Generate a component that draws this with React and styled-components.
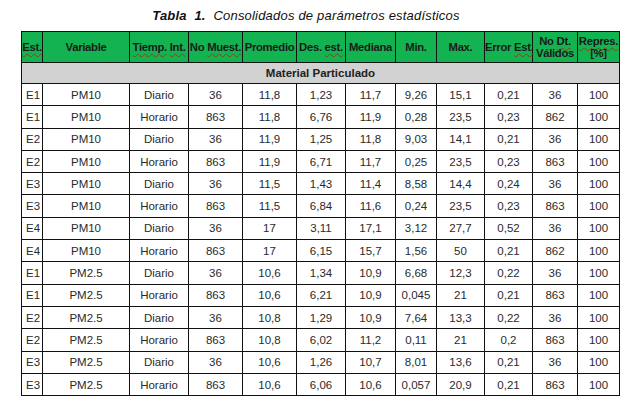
import React from 'react';
import styled, { createGlobalStyle } from 'styled-components';

const GlobalStyle = createGlobalStyle`
  body {
    margin: 0;
    background: #fff;
    font-family: "Liberation Sans", Arial, sans-serif;
  }
`;

const Page = styled.div`
  width: 639px;
  height: 407px;
  padding: 8px 0 0 21px;
  box-sizing: border-box;
  overflow: hidden;
`;

const Title = styled.div`
  width: 570px;
  text-align: center;
  font-size: 13px;
  font-style: italic;
  color: #111;
  height: 23px;
  letter-spacing: 0.2px;
  b {
    font-weight: bold;
    margin-right: 4px;
  }
`;

const Table = styled.table`
  border-collapse: collapse;
  table-layout: fixed;
  width: 598px;
  color: #2a2a2a;
  font-size: 11.5px;
`;

const HeadCell = styled.th`
  background: #14b352;
  border: 1px solid #111;
  height: 30px;
  padding: 0;
  font-size: 11.3px;
  font-weight: bold;
  color: #1a1a1a;
  line-height: 12px;
  letter-spacing: -0.3px;
  text-align: center;
  white-space: nowrap;
`;

const Squiggle = styled.span`
  text-decoration: underline wavy #7a4a1a;
  text-decoration-thickness: 1px;
  text-underline-offset: 2px;
`;

const GroupCell = styled.td`
  background: #d2d2d2;
  border: 1px solid #111;
  height: 20px;
  padding: 0;
  text-align: center;
  font-weight: bold;
  font-size: 11.5px;
  color: #222;
`;

const Row = styled.tr`
  height: 22.3px;
`;

const Cell = styled.td`
  border: 1px solid #111;
  padding: ${({ $left }) => ($left ? '0 0 0 4px' : '0')};
  text-align: ${({ $left }) => ($left ? 'left' : 'center')};
  white-space: nowrap;
`;

const widths = [21, 87, 59, 54, 54, 49, 50, 41, 48, 48, 45, 42];

const rows = [
  ['E1', 'PM10', 'Diario', '36', '11,8', '1,23', '11,7', '9,26', '15,1', '0,21', '36', '100'],
  ['E1', 'PM10', 'Horario', '863', '11,8', '6,76', '11,9', '0,28', '23,5', '0,23', '862', '100'],
  ['E2', 'PM10', 'Diario', '36', '11,9', '1,25', '11,8', '9,03', '14,1', '0,21', '36', '100'],
  ['E2', 'PM10', 'Horario', '863', '11,9', '6,71', '11,7', '0,25', '23,5', '0,23', '863', '100'],
  ['E3', 'PM10', 'Diario', '36', '11,5', '1,43', '11,4', '8,58', '14,4', '0,24', '36', '100'],
  ['E3', 'PM10', 'Horario', '863', '11,5', '6,84', '11,6', '0,24', '23,5', '0,23', '863', '100'],
  ['E4', 'PM10', 'Diario', '36', '17', '3,11', '17,1', '3,12', '27,7', '0,52', '36', '100'],
  ['E4', 'PM10', 'Horario', '863', '17', '6,15', '15,7', '1,56', '50', '0,21', '862', '100'],
  ['E1', 'PM2.5', 'Diario', '36', '10,6', '1,34', '10,9', '6,68', '12,3', '0,22', '36', '100'],
  ['E1', 'PM2.5', 'Horario', '863', '10,6', '6,21', '10,9', '0,045', '21', '0,21', '863', '100'],
  ['E2', 'PM2.5', 'Diario', '36', '10,8', '1,29', '10,9', '7,64', '13,3', '0,22', '36', '100'],
  ['E2', 'PM2.5', 'Horario', '863', '10,8', '6,02', '11,2', '0,11', '21', '0,2', '863', '100'],
  ['E3', 'PM2.5', 'Diario', '36', '10,6', '1,26', '10,7', '8,01', '13,6', '0,21', '36', '100'],
  ['E3', 'PM2.5', 'Horario', '863', '10,6', '6,06', '10,6', '0,057', '20,9', '0,21', '863', '100'],
];

export default function App() {
  return (
    <>
      <GlobalStyle />
      <Page>
        <Title>
          <b>Tabla&nbsp; 1.</b> Consolidados de parámetros estadísticos
        </Title>
        <Table>
          <colgroup>
            {widths.map((w, i) => (
              <col key={i} style={{ width: w }} />
            ))}
          </colgroup>
          <thead>
            <tr>
              <HeadCell><Squiggle>Est.</Squiggle></HeadCell>
              <HeadCell>Variable</HeadCell>
              <HeadCell><Squiggle>Tiemp.</Squiggle> <Squiggle>Int.</Squiggle></HeadCell>
              <HeadCell>No <Squiggle>Muest.</Squiggle></HeadCell>
              <HeadCell>Promedio</HeadCell>
              <HeadCell>Des. <Squiggle>est.</Squiggle></HeadCell>
              <HeadCell>Mediana</HeadCell>
              <HeadCell>Min.</HeadCell>
              <HeadCell>Max.</HeadCell>
              <HeadCell>Error <Squiggle>Est.</Squiggle></HeadCell>
              <HeadCell>No <Squiggle>Dt.</Squiggle><br />Válidos</HeadCell>
              <HeadCell><Squiggle>Repres.</Squiggle><br />[%]</HeadCell>
            </tr>
          </thead>
          <tbody>
            <tr>
              <GroupCell colSpan={12}>Material Particulado</GroupCell>
            </tr>
            {rows.map((r, i) => (
              <Row key={i}>
                {r.map((v, j) => (
                  <Cell key={j} $left={j === 0}>{v}</Cell>
                ))}
              </Row>
            ))}
          </tbody>
        </Table>
      </Page>
    </>
  );
}
